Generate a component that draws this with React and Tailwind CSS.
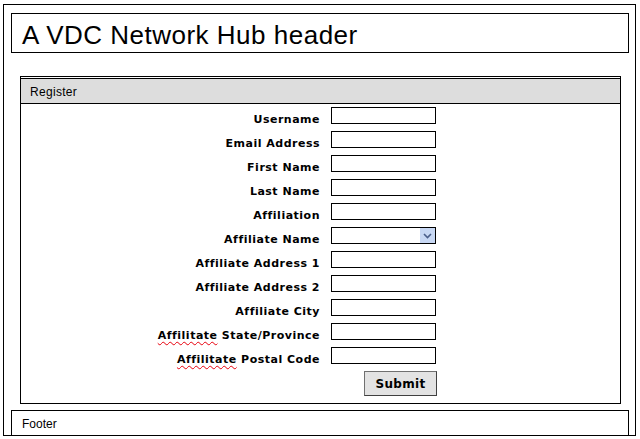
import React from "react";

const fields = [
  { label: "Username" },
  { label: "Email Address" },
  { label: "First Name" },
  { label: "Last Name" },
  { label: "Affiliation" },
  { label: "Affiliate Name", select: true },
  { label: "Affiliate Address 1" },
  { label: "Affiliate Address 2" },
  { label: "Affiliate City" },
  { label: "Affilitate State/Province", typo: "Affilitate", rest: " State/Province" },
  { label: "Affilitate Postal Code", typo: "Affilitate", rest: " Postal Code" },
];

const Squiggle = ({ children }) => (
  <span className="underline decoration-wavy decoration-red-600 decoration-1 underline-offset-2">
    {children}
  </span>
);

export default function App() {
  return (
    <div className="h-[439px] w-[640px] overflow-hidden bg-white font-['DejaVu_Sans',sans-serif] text-black">
      <div className="ml-[3px] mt-[4px] h-[432px] w-[633px] overflow-hidden border border-black px-[7px] pt-[8px]">
        <div className="h-[40px] w-[618px] border border-black pl-[10px] pt-[2px]">
          <h1 className="font-['Liberation_Sans',sans-serif] text-[26px] leading-[38px] font-normal tracking-[0.5px]">
            A VDC Network Hub header
          </h1>
        </div>

        <div className="ml-[9px] mt-[23px] w-[601px] border border-black">
          <div className="mt-[1px] h-[26px] border-t border-b border-black bg-[#dddddd] pl-[9px] pt-[1px] text-[12px] leading-[24px] font-['Liberation_Sans',sans-serif] tracking-[0.3px]">
            Register
          </div>

          <div className="flex flex-col gap-[7px] pt-[3px] pb-[7px]">
            {fields.map((f) => (
              <div key={f.label} className="flex h-[17px] items-start">
                <label className="w-[300px] pr-[1px] pt-[4px] text-right text-[11px] font-bold leading-[17px] tracking-[0.5px]">
                  {f.typo ? (
                    <>
                      <Squiggle>{f.typo}</Squiggle>
                      {f.rest}
                    </>
                  ) : (
                    f.label
                  )}
                </label>
                <div className="ml-[10px] relative h-[17px] w-[105px] border border-black bg-white">
                  {f.select && (
                    <div className="absolute right-0 top-0 flex h-[15px] w-[15px] items-center justify-center bg-[#c8d8f4]">
                      <svg width="9" height="6" viewBox="0 0 9 6">
                        <path d="M1 1 L4.5 4.5 L8 1" fill="none" stroke="#4b5f8a" strokeWidth="1.6" />
                      </svg>
                    </div>
                  )}
                </div>
              </div>
            ))}

            <div className="flex pl-[343px]">
              <button className="h-[25px] w-[73px] border border-[#707070] border-r-[#404040] border-b-[#404040] bg-[#e3e3e3] text-[12px] font-bold tracking-[0.3px]">
                Submit
              </button>
            </div>
          </div>
        </div>

        <div className="mt-[6px] h-[40px] w-[618px] border border-black pl-[10px] pt-[2px] text-[12px] leading-[22px] font-['Liberation_Sans',sans-serif]">
          Footer
        </div>
      </div>
    </div>
  );
}
